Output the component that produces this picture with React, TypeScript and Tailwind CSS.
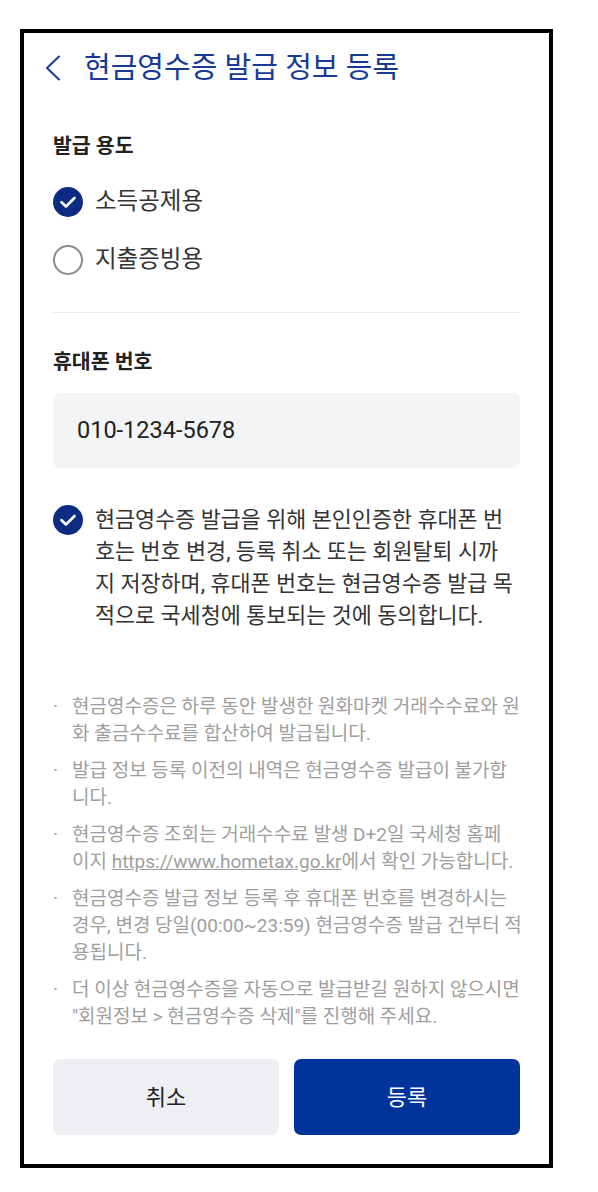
import React from "react";

const font = { fontFamily: 'Roboto, "Noto Sans CJK KR", "Noto Sans", sans-serif' };

function CheckCircle() {
  return (
    <svg width="30" height="30" viewBox="0 0 30 30" className="shrink-0">
      <circle cx="15" cy="15" r="15" fill="#0c2c82" />
      <path d="M8.5 15.2 L13 19.5 L21.5 11" fill="none" stroke="#fff" strokeWidth="2.6" strokeLinecap="round" strokeLinejoin="round" />
    </svg>
  );
}

function RadioCircle() {
  return (
    <svg width="30" height="30" viewBox="0 0 30 30" className="shrink-0">
      <circle cx="15" cy="15" r="14" fill="#fff" stroke="#8c8c8c" strokeWidth="2" />
    </svg>
  );
}

const notes: React.ReactNode[][] = [
  ["현금영수증은 하루 동안 발생한 원화마켓 거래수수료와 원", "화 출금수수료를 합산하여 발급됩니다."],
  ["발급 정보 등록 이전의 내역은 현금영수증 발급이 불가합", "니다."],
  [
    "현금영수증 조회는 거래수수료 발생 D+2일 국세청 홈페",
    <>
      이지 <span className="underline">https://www.hometax.go.kr</span>에서 확인 가능합니다.
    </>,
  ],
  [
    "현금영수증 발급 정보 등록 후 휴대폰 번호를 변경하시는",
    "경우, 변경 당일(00:00~23:59) 현금영수증 발급 건부터 적",
    "용됩니다.",
  ],
  ["더 이상 현금영수증을 자동으로 발급받길 원하지 않으시면", "\"회원정보 > 현금영수증 삭제\"를 진행해 주세요."],
];

export default function App() {
  return (
    <div className="bg-white w-[598px] h-[1192px] pt-[29px] pl-[20px]" style={font}>
      <div className="box-border w-[533px] h-[1139px] border-4 border-black bg-white flex flex-col">
        {/* Header */}
        <div className="h-[70px] flex items-center pl-[21px] shrink-0">
          <svg width="16" height="26" viewBox="0 0 16 26" className="shrink-0">
            <path d="M14 1.5 L2 13 L14 24.5" fill="none" stroke="#183a97" strokeWidth="2" strokeLinecap="round" strokeLinejoin="round" />
          </svg>
          <div className="ml-[23px] text-[29px] leading-[36px] text-[#183a97] whitespace-nowrap">
            현금영수증 발급 정보 등록
          </div>
        </div>

        <div className="px-[29px] flex flex-col">
          {/* 발급 용도 */}
          <div className="mt-[29px] text-[20.5px] leading-[28px] font-bold text-[#222]">발급 용도</div>
          <div className="mt-[27px] flex items-center h-[30px]">
            <CheckCircle />
            <span className="ml-[12px] text-[23.5px] text-[#333] whitespace-nowrap">소득공제용</span>
          </div>
          <div className="mt-[28px] flex items-center h-[30px]">
            <RadioCircle />
            <span className="ml-[12px] text-[23.5px] text-[#333] whitespace-nowrap">지출증빙용</span>
          </div>
          <div className="mt-[37px] h-px bg-[#ececf0]" />

          {/* 휴대폰 번호 */}
          <div className="mt-[35px] text-[20.5px] leading-[28px] font-bold text-[#222]">휴대폰 번호</div>
          <div className="mt-[17px] h-[75px] rounded-[7px] bg-[#f3f4f6] flex items-center pl-[24px] text-[23.5px] text-[#222]">
            010-1234-5678
          </div>

          {/* consent */}
          <div className="mt-[36px] flex">
            <div className="pt-[1px]">
              <CheckCircle />
            </div>
            <div className="ml-[12px] text-[21.8px] leading-[32px] text-[#333]">
              <div className="whitespace-nowrap">현금영수증 발급을 위해 본인인증한 휴대폰 번</div>
              <div className="whitespace-nowrap">호는 번호 변경, 등록 취소 또는 회원탈퇴 시까</div>
              <div className="whitespace-nowrap">지 저장하며, 휴대폰 번호는 현금영수증 발급 목</div>
              <div className="whitespace-nowrap">적으로 국세청에 통보되는 것에 동의합니다.</div>
            </div>
          </div>

          {/* notes */}
          <div className="mt-[61px] flex flex-col gap-[10px] text-[19px] leading-[27px] text-[#9e9e9e]">
            {notes.map((lines, i) => (
              <div key={i} className="flex">
                <span className="w-[19px] shrink-0">·</span>
                <div>
                  {lines.map((l, j) => (
                    <div key={j} className="whitespace-nowrap">
                      {l}
                    </div>
                  ))}
                </div>
              </div>
            ))}
          </div>

          {/* buttons */}
          <div className="mt-[29px] flex gap-[15px]">
            <button className="flex-1 h-[76px] rounded-[7px] bg-[#eeeff2] text-[22px] text-[#222]">취소</button>
            <button className="flex-1 h-[76px] rounded-[7px] bg-[#00349a] text-[22px] text-white">등록</button>
          </div>
        </div>
      </div>
    </div>
  );
}
